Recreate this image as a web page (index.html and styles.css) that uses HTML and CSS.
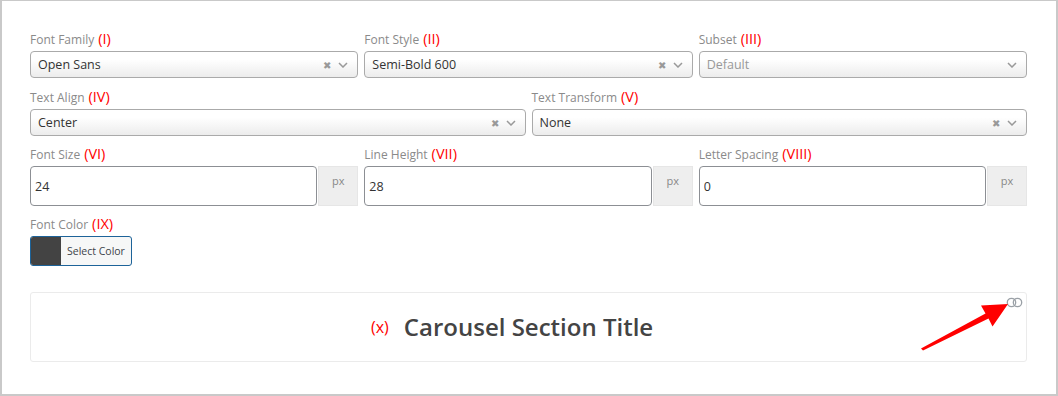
FILE: index.html
```html
<!DOCTYPE html>
<html lang="en">
<head>
    <meta charset="UTF-8">
    <title>Typography Settings</title>
    <link rel="stylesheet" href="styles.css">
</head>
<body>
    <div class="panel">
        <div class="row row-3">
            <div class="field">
                <label>Font Family <span class="mark">(I)</span></label>
                <div class="select">
                    <span class="value">Open Sans</span>
                    <span class="clear">&#10006;</span>
                    <svg class="chev" width="10" height="6" viewBox="0 0 10 6"><path d="M1 1l4 4 4-4" fill="none" stroke="#999" stroke-width="1.5"/></svg>
                </div>
            </div>
            <div class="field">
                <label>Font Style <span class="mark">(II)</span></label>
                <div class="select">
                    <span class="value">Semi-Bold 600</span>
                    <span class="clear">&#10006;</span>
                    <svg class="chev" width="10" height="6" viewBox="0 0 10 6"><path d="M1 1l4 4 4-4" fill="none" stroke="#999" stroke-width="1.5"/></svg>
                </div>
            </div>
            <div class="field">
                <label>Subset <span class="mark">(III)</span></label>
                <div class="select disabled">
                    <span class="value">Default</span>
                    <svg class="chev" width="10" height="6" viewBox="0 0 10 6"><path d="M1 1l4 4 4-4" fill="none" stroke="#999" stroke-width="1.5"/></svg>
                </div>
            </div>
        </div>

        <div class="row row-2">
            <div class="field">
                <label>Text Align <span class="mark">(IV)</span></label>
                <div class="select">
                    <span class="value">Center</span>
                    <span class="clear">&#10006;</span>
                    <svg class="chev" width="10" height="6" viewBox="0 0 10 6"><path d="M1 1l4 4 4-4" fill="none" stroke="#999" stroke-width="1.5"/></svg>
                </div>
            </div>
            <div class="field">
                <label>Text Transform <span class="mark">(V)</span></label>
                <div class="select">
                    <span class="value">None</span>
                    <span class="clear">&#10006;</span>
                    <svg class="chev" width="10" height="6" viewBox="0 0 10 6"><path d="M1 1l4 4 4-4" fill="none" stroke="#999" stroke-width="1.5"/></svg>
                </div>
            </div>
        </div>

        <div class="row row-3">
            <div class="field">
                <label>Font Size <span class="mark">(VI)</span></label>
                <div class="unit-input">
                    <input type="text" value="24">
                    <span class="unit">px</span>
                </div>
            </div>
            <div class="field">
                <label>Line Height <span class="mark">(VII)</span></label>
                <div class="unit-input">
                    <input type="text" value="28">
                    <span class="unit">px</span>
                </div>
            </div>
            <div class="field">
                <label>Letter Spacing <span class="mark">(VIII)</span></label>
                <div class="unit-input">
                    <input type="text" value="0">
                    <span class="unit">px</span>
                </div>
            </div>
        </div>

        <div class="field">
            <label>Font Color <span class="mark">(IX)</span></label>
            <button class="color-btn">
                <span class="swatch"></span>
                <span class="color-text">Select Color</span>
            </button>
        </div>

        <div class="preview">
            <span class="preview-mark">(x)</span>
            <h2 class="preview-title">Carousel Section Title</h2>
            <svg class="toggle" width="17" height="11" viewBox="0 0 17 11">
                <circle cx="5.5" cy="5.5" r="4.2" fill="none" stroke="#9aa0a6" stroke-width="1.3"/>
                <circle cx="11.5" cy="5.5" r="4.2" fill="none" stroke="#9aa0a6" stroke-width="1.3"/>
            </svg>
        </div>

        <!-- annotation arrow -->
        <svg class="arrow" width="1058" height="396" viewBox="0 0 1058 396">
            <polygon points="921,348.5 985.5,313.5 981,305.5 1008,304 992.5,326.5 988.5,318.5 923,350.5" fill="#ff0000"/>
        </svg>
    </div>
</body>
</html>
```

FILE: styles.css
```css
* {
    margin: 0;
    padding: 0;
    box-sizing: border-box;
}

body {
    font-family: "Open Sans", "Liberation Sans", sans-serif;
    background: #fff;
    color: #333;
}

.panel {
    position: relative;
    width: 1058px;
    height: 396px;
    border: 2px solid #c9c9c9;
    border-top-width: 1px;
    padding: 29px 29px 0 28px;
}

.row {
    display: grid;
    gap: 6px;
    margin-bottom: 9px;
}

.row:first-child {
    margin-bottom: 10px;
}

.row-3 {
    grid-template-columns: repeat(3, 1fr);
}

.row-2 {
    grid-template-columns: repeat(2, 1fr);
}

.field label {
    display: flex;
    align-items: baseline;
    height: 18px;
    font-size: 12px;
    line-height: 18px;
    color: #8a8a8a;
    margin-bottom: 3px;
    white-space: nowrap;
}

.mark {
    color: #ff0000;
    font-size: 14.5px;
    line-height: 18px;
    margin-left: 4px;
}

.select {
    display: flex;
    align-items: center;
    height: 27px;
    padding: 0 9px 0 7px;
    border: 1px solid #aaa;
    border-radius: 4px;
    background: linear-gradient(to bottom, #fff 0%, #fff 30%, #ececec 100%);
    font-size: 12.5px;
    color: #333;
}

.select .value {
    flex: 1;
}

.select.disabled .value {
    color: #999;
}

.select .clear {
    font-size: 10px;
    color: #999;
    margin-right: 7px;
}

.unit-input {
    display: flex;
    height: 40px;
}

.unit-input input {
    flex: 1;
    min-width: 0;
    border: 1px solid #8c8f94;
    border-radius: 4px;
    padding: 0 4px;
    font-family: inherit;
    font-size: 12.5px;
    color: #333;
    outline: none;
}

.unit {
    width: 40px;
    margin-left: 1px;
    background: #eee;
    border: 1px solid #e6e6e6;
    color: #888;
    font-size: 11px;
    text-align: center;
    padding-top: 6px;
}

.color-btn {
    display: flex;
    align-items: stretch;
    height: 30px;
    border: 1px solid #1d6399;
    border-radius: 3px;
    overflow: hidden;
    background: #f6f7f7;
    font-family: inherit;
    cursor: pointer;
}

.swatch {
    width: 30px;
    background: #434343;
}

.color-text {
    display: flex;
    align-items: center;
    padding: 0 6px;
    font-size: 10.5px;
    color: #3c434a;
}

.preview {
    position: relative;
    margin-top: 26px;
    height: 70px;
    border: 1px solid #ebebeb;
    border-radius: 3px;
    display: flex;
    align-items: center;
    justify-content: center;
}

.preview-title {
    font-size: 24px;
    line-height: 28px;
    font-weight: 600;
    color: #444;
}

.preview-mark {
    position: absolute;
    left: 340px;
    top: 23px;
    color: #ff0000;
    font-size: 16px;
}

.toggle {
    position: absolute;
    right: 3px;
    top: 4px;
}

.arrow {
    position: absolute;
    left: -2px;
    top: -1px;
    pointer-events: none;
}
```
